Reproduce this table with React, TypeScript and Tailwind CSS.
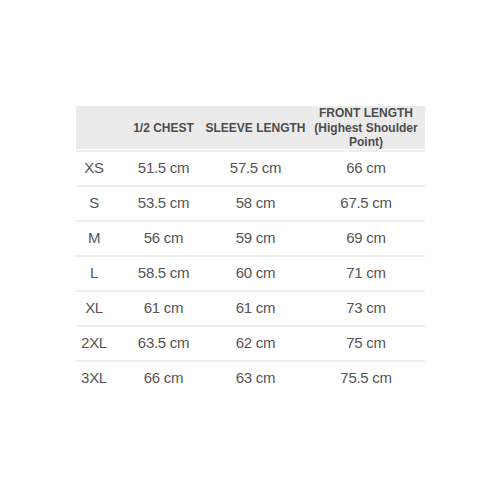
const sizes = [
  { size: 'XS', chest: '51.5 cm', sleeve: '57.5 cm', front: '66 cm' },
  { size: 'S', chest: '53.5 cm', sleeve: '58 cm', front: '67.5 cm' },
  { size: 'M', chest: '56 cm', sleeve: '59 cm', front: '69 cm' },
  { size: 'L', chest: '58.5 cm', sleeve: '60 cm', front: '71 cm' },
  { size: 'XL', chest: '61 cm', sleeve: '61 cm', front: '73 cm' },
  { size: '2XL', chest: '63.5 cm', sleeve: '62 cm', front: '75 cm' },
  { size: '3XL', chest: '66 cm', sleeve: '63 cm', front: '75.5 cm' },
];

const cols = 'grid grid-cols-[37px_102px_88px_122px]';

export default function App() {
  return (
    <div
      className="w-[500px] h-[500px] bg-white pt-[106px]"
      style={{ fontFamily: '"Liberation Sans", Arial, sans-serif' }}
    >
      <div className="w-[349px] mx-auto text-[#555]">
        <div className={`${cols} h-[43px] mb-[1px] bg-[#ebebeb] text-[12px] font-bold leading-[14.5px] text-[#4d4d4d]`}>
          <div />
          <div className="flex items-center justify-center whitespace-nowrap">1/2 CHEST</div>
          <div className="flex items-center justify-center whitespace-nowrap pr-[6px]">SLEEVE LENGTH</div>
          <div className="flex items-center justify-center text-center pl-[5px]">
            <span className="whitespace-nowrap">
              FRONT LENGTH
              <br />
              (Highest Shoulder
              <br />
              Point)
            </span>
          </div>
        </div>

        {sizes.map((row) => (
          <div
            key={row.size}
            className={`${cols} h-[35px] border-t-2 border-[#eeeeee] text-[15px] tracking-[-0.3px] text-[#555]`}
          >
            <div className="flex items-center justify-center whitespace-nowrap">{row.size}</div>
            <div className="flex items-center justify-center whitespace-nowrap">{row.chest}</div>
            <div className="flex items-center justify-center whitespace-nowrap pr-[6px]">{row.sleeve}</div>
            <div className="flex items-center justify-center whitespace-nowrap pl-[5px]">{row.front}</div>
          </div>
        ))}
      </div>
    </div>
  );
}
